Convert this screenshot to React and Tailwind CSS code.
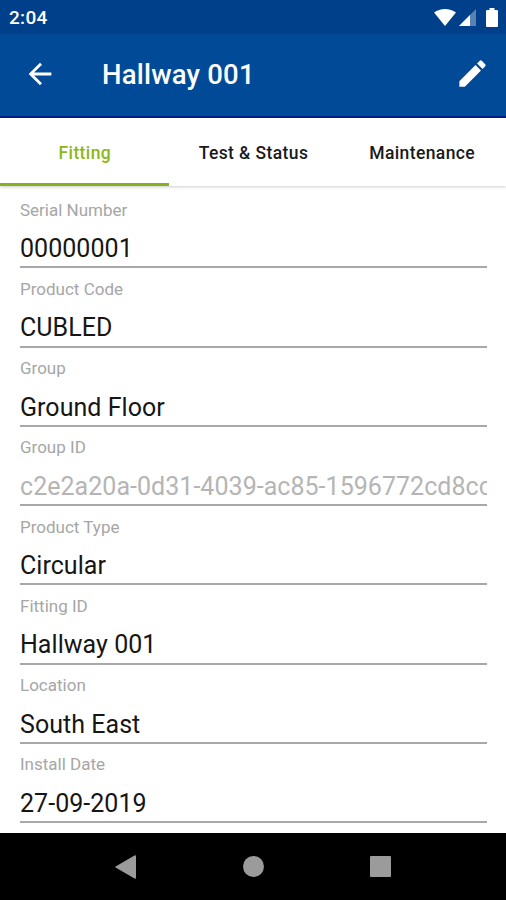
const FIELDS = [
  { label: 'Serial Number', value: '00000001' },
  { label: 'Product Code', value: 'CUBLED' },
  { label: 'Group', value: 'Ground Floor' },
  { label: 'Group ID', value: 'c2e2a20a-0d31-4039-ac85-1596772cd8cc', disabled: true },
  { label: 'Product Type', value: 'Circular' },
  { label: 'Fitting ID', value: 'Hallway 001' },
  { label: 'Location', value: 'South East' },
  { label: 'Install Date', value: '27-09-2019' },
]

const TABS = ['Fitting', 'Test & Status', 'Maintenance']

function StatusBar() {
  return (
    <div className="flex h-[34px] items-center justify-between bg-[#003f8a] pl-[9px] pr-[8px]">
      <span className="text-[19px] font-medium leading-none tracking-[0.3px]">2:04</span>
      <div className="flex items-center">
        <svg className="h-[17px] w-[22px]" viewBox="0 0 22 17" fill="currentColor">
          <path d="M0 3.6C3 1.2 7 0 11 0s8 1.2 11 3.6L11 17z" />
        </svg>
        <svg className="ml-[3px] h-[17px] w-[17px]" viewBox="0 0 17 17" fill="currentColor">
          <path d="M17 0v17H0z" opacity="0.35" />
          <path d="M11 6v11H0z" />
        </svg>
        <svg className="ml-[10px] h-[19px] w-[12px]" viewBox="0 0 12 19" fill="currentColor">
          <path d="M3.5 0h5v2H11a1 1 0 0 1 1 1v15a1 1 0 0 1-1 1H1a1 1 0 0 1-1-1V3a1 1 0 0 1 1-1h2.500z" />
        </svg>
      </div>
    </div>
  )
}

function AppBar({ title }) {
  return (
    <header className="flex h-[84px] items-center border-b-2 border-[#001f8c] bg-[#004a97] pl-[23px] pr-[16px]">
      <button aria-label="Back" className="-mt-[3px]">
        <svg className="h-[34px] w-[34px]" viewBox="0 0 24 24" fill="currentColor">
          <path d="M20 11H7.830l5.590-5.590L12 4l-8 8 8 8 1.410-1.410L7.830 13H20v-2z" />
        </svg>
      </button>
      <h1 className="ml-[45px] flex-1 text-[27.500px] font-medium leading-none tracking-[0.2px]">{title}</h1>
      <button aria-label="Edit" className="-mt-[4px]">
        <svg className="h-[35px] w-[35px]" viewBox="0 0 24 24" fill="currentColor">
          <path d="M3 17.250V21h3.750L17.810 9.940l-3.750-3.750L3 17.250zM20.710 7.040a1 1 0 0 0 0-1.410l-2.340-2.340a1 1 0 0 0-1.410 0l-1.830 1.830 3.750 3.750 1.830-1.830z" />
        </svg>
      </button>
    </header>
  )
}

function Tabs({ active }) {
  return (
    <nav className="grid h-[68px] grid-cols-3 bg-white shadow-[0_1px_3px_rgba(0,0,0,0.2)]">
      {TABS.map((tab) => (
        <button
          key={tab}
          className={`border-b-[3px] pl-px pt-[5px] text-[17.500px] font-medium tracking-[0.4px] ${
            tab === active ? 'border-[#87b11f] text-[#8ab71b]' : 'border-transparent text-[#1a1a1a]'
          }`}
        >
          {tab}
        </button>
      ))}
    </nav>
  )
}

function Field({ label, value, disabled }) {
  return (
    <div className="flex h-[79.25px] flex-col border-b-2 border-[#a8a8a8]">
      <div className="mt-[10.500px] text-[17px] leading-[20px] text-[#a6a6a6]">{label}</div>
      <div
        className={`mt-[14.500px] overflow-hidden whitespace-nowrap text-[25px] leading-[30px] tracking-[0.04px] ${
          disabled ? 'text-[#b5b5b5]' : 'text-[#161616]'
        }`}
      >
        {value}
      </div>
    </div>
  )
}

function NavBar() {
  return (
    <div className="grid h-[67px] grid-cols-[1fr_22px_1fr] items-center bg-black text-[#9b9b9b]">
      <svg className="ml-[115px] h-[24px] w-[21px]" viewBox="0 0 21 24" fill="currentColor">
        <path d="M19.500.5Q21-.2 21 1.500v21q0 1.700-1.500 1L.6 12.600q-.8-.6 0-1.200z" />
      </svg>
      <div className="ml-px size-[21px] rounded-full bg-current" />
      <div className="ml-[105.500px] size-[21px] rounded-[1px] bg-current" />
    </div>
  )
}

export default function App() {
  return (
    <div className="flex h-[900px] w-[506px] flex-col overflow-hidden bg-white font-['Roboto',sans-serif] text-white">
      <StatusBar />
      <AppBar title="Hallway 001" />
      <Tabs active="Fitting" />
      <main className="flex-1 pl-[20px] pr-[19px] pt-[3px]">
        {FIELDS.map((field) => (
          <Field key={field.label} {...field} />
        ))}
      </main>
      <NavBar />
    </div>
  )
}
